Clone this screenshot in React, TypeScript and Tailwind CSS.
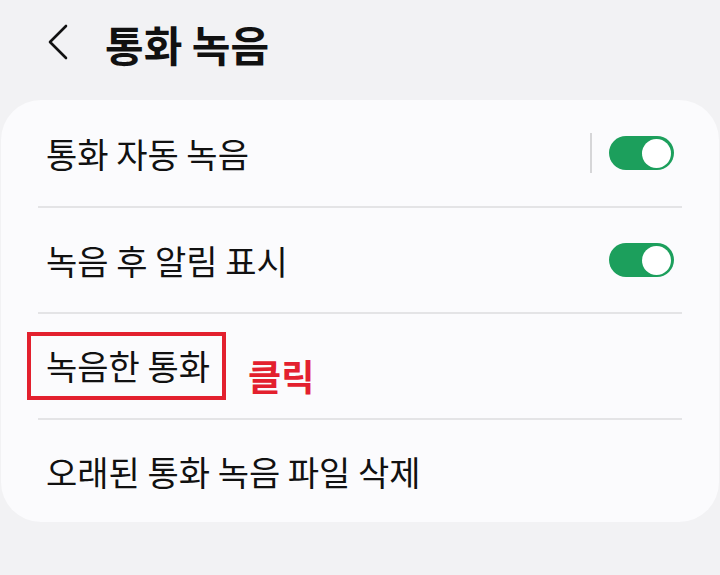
const font = { fontFamily: '"Noto Sans CJK KR", "Noto Sans", sans-serif' };

const Toggle = () => (
  <div className="flex h-[34px] w-[65px] items-center justify-end rounded-full bg-[#1c9f5c] px-[3px]">
    <div className="h-[29px] w-[29px] rounded-full bg-white" />
  </div>
);

const Divider = () => <div className="mx-[37px] h-[2px] bg-[#e4e4e6]" />;

const App = () => {
  return (
    <div className="h-[575px] w-[720px] overflow-hidden bg-[#f2f2f4] text-[#111111]" style={font}>
      <div className="flex h-[100px] items-start pt-[16px]">
        <svg className="ml-[46px] mt-[8px] h-[36px] w-[24px]" viewBox="0 0 24 36" fill="none">
          <path d="M20 2 L4 18 L20 34" stroke="#111111" strokeWidth="2.6" strokeLinecap="round" strokeLinejoin="round" />
        </svg>
        <h1 className="ml-[35px] text-[42px] leading-[56px] font-bold">통화 녹음</h1>
      </div>

      <div className="mx-[1px] rounded-[40px] bg-[#fbfbfd]">
        <div className="flex h-[106px] items-center justify-between px-[45px]">
          <span className="text-[34px]">통화 자동 녹음</span>
          <div className="flex items-center">
            <div className="mr-[17px] h-[40px] w-[2px] bg-[#d6d6d8]" />
            <Toggle />
          </div>
        </div>
        <Divider />
        <div className="flex h-[104px] items-center justify-between px-[45px]">
          <span className="text-[34px]">녹음 후 알림 표시</span>
          <Toggle />
        </div>
        <Divider />
        <div className="flex h-[104px] items-center px-[45px]">
          <span className="-ml-[19px] border-[4px] border-[#e3202e] pl-[15px] pr-[12px] py-[7px] text-[34px] leading-[46px]">
            녹음한 통화
          </span>
          <span className="ml-[22px] mt-[18px] text-[36px] font-bold text-[#e3202e]">클릭</span>
        </div>
        <Divider />
        <div className="flex h-[102px] items-center px-[45px]">
          <span className="text-[34px]">오래된 통화 녹음 파일 삭제</span>
        </div>
      </div>
    </div>
  );
};

export default App;
